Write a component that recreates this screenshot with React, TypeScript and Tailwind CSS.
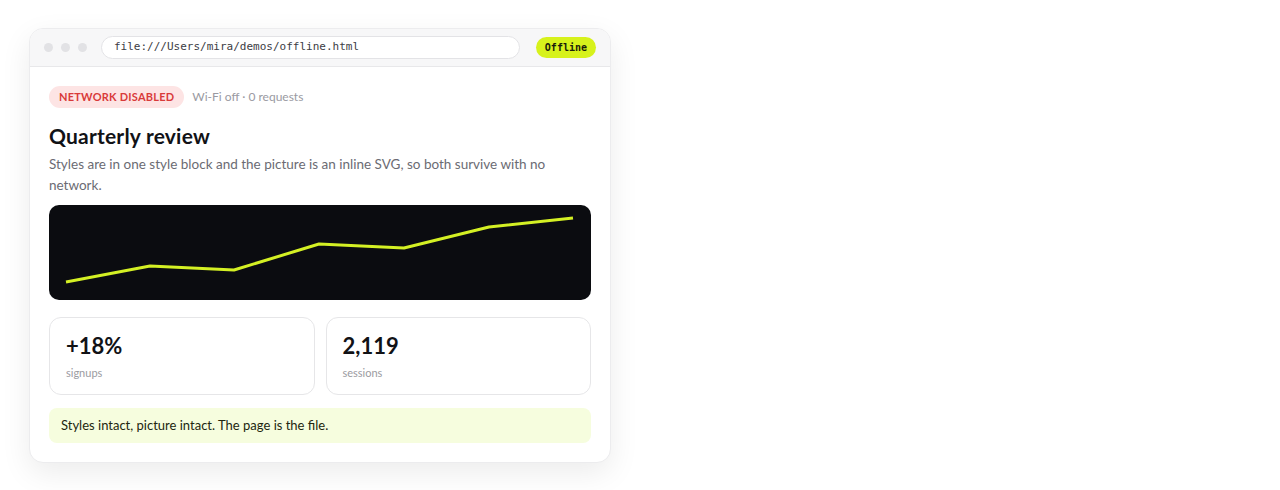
import React from 'react'

const POINTS: [number, number][] = [
  [17, 77], [101, 61], [185, 65], [270, 39], [355, 43], [440, 22], [524, 13],
]

function Stat({ value, label }: { value: string; label: string }) {
  return (
    <div className="flex-1 border border-[#e6e6e8] rounded-xl px-4 pt-[13px] pb-3 flex flex-col">
      <span className="text-[22px] leading-[30px] font-bold text-[#111216]">{value}</span>
      <span className="text-[11px] leading-[18px] text-[#9b9ba1] mt-[3px]">{label}</span>
    </div>
  )
}

export default function App() {
  return (
    <div className="min-h-[490px] bg-white p-[28px_29px]" style={{ fontFamily: 'Lato, "Noto Sans", sans-serif' }}>
      <div className="w-[582px] bg-white rounded-[14px] border border-[#ececee] shadow-[0_10px_30px_rgba(0,0,0,0.08)] overflow-hidden">
        {/* Title bar */}
        <div className="h-[38px] bg-[#f7f7f8] border-b border-[#e8e8ea] flex items-center px-[14px] gap-[8px]">
          <div className="flex gap-[8px] mr-[6px]">
            <span className="w-[9px] h-[9px] rounded-full bg-[#e2e2e5]" />
            <span className="w-[9px] h-[9px] rounded-full bg-[#e2e2e5]" />
            <span className="w-[9px] h-[9px] rounded-full bg-[#e2e2e5]" />
          </div>
          <div className="flex-1 h-[23px] bg-white border border-[#e3e3e6] rounded-full flex items-center px-[12px] text-[11px] text-[#3c3c44]" style={{ fontFamily: '"DejaVu Sans Mono", monospace' }}>
            file:///Users/mira/demos/offline.html
          </div>
          <div className="ml-[8px] h-[21px] px-[9px] rounded-full bg-[#d7f21c] flex items-center text-[10px] font-bold text-[#1a1c0a]" style={{ fontFamily: '"DejaVu Sans Mono", monospace' }}>
            Offline
          </div>
        </div>

        {/* Content */}
        <div className="px-[19px] pt-[19px] pb-[19px] flex flex-col">
          <div className="flex items-center gap-[8px]">
            <span className="h-[22px] px-[10px] rounded-full bg-[#fde4e4] text-[#d93a3a] text-[11px] font-bold tracking-[0.02em] flex items-center">NETWORK DISABLED</span>
            <span className="text-[12px] text-[#9a9aa2]">Wi-Fi off · 0 requests</span>
          </div>
          <h1 className="mt-[14px] text-[21px] leading-[28px] font-bold tracking-[0.01em] text-[#111216]">Quarterly review</h1>
          <p className="mt-[4px] text-[13.5px] leading-[21px] text-[#6b6b73]">
            Styles are in one style block and the picture is an inline SVG, so both survive with no network.
          </p>
          <div className="mt-[9px] h-[95px] rounded-[10px] bg-[#0b0c10] overflow-hidden">
            <svg width="542" height="95" viewBox="0 0 542 95">
              <polyline
                points={POINTS.map(p => p.join(',')).join(' ')}
                fill="none"
                stroke="#d4f024"
                strokeWidth="3"
                strokeLinejoin="round"
              />
            </svg>
          </div>
          <div className="mt-[17px] flex gap-[11px]">
            <Stat value="+18%" label="signups" />
            <Stat value="2,119" label="sessions" />
          </div>
          <div className="mt-[13px] h-[35px] rounded-lg bg-[#f6fdde] px-[12px] flex items-center text-[13px] text-[#22260f]">
            Styles intact, picture intact. The page is the file.
          </div>
        </div>
      </div>
    </div>
  )
}
